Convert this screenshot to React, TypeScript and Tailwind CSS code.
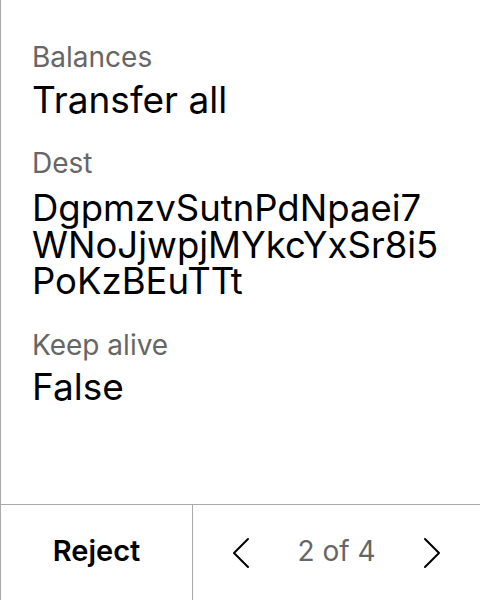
const FONT = { fontFamily: 'Inter, "Liberation Sans", sans-serif' };

function Chevron({ dir }: { dir: 'left' | 'right' }) {
  return (
    <svg width="18" height="32" viewBox="0 0 18 32" fill="none" className="shrink-0">
      <polyline
        points={dir === 'left' ? '16,2 2,16 16,30' : '2,2 16,16 2,30'}
        stroke="black"
        strokeWidth="2"
        strokeLinecap="round"
        strokeLinejoin="round"
      />
    </svg>
  );
}

export default function App() {
  return (
    <div
      className="w-[480px] h-[600px] bg-white border-l border-[#aaaaaa] flex flex-col"
      style={FONT}
    >
      <div className="flex-1 pl-[31px] pr-2 pt-[41px]">
        <p className="text-[28px] leading-[32px] text-[#666666]">Balances</p>
        <p className="mt-[8px] text-[37px] leading-[37px] text-black">Transfer all</p>

        <p className="mt-[29px] text-[28px] leading-[32px] text-[#666666]">Dest</p>
        <p className="mt-[11px] text-[36.5px] leading-[36.7px] text-black">
          DgpmzvSutnPdNpaei7
          <br />
          WNoJjwpjMYkcYxSr8i5
          <br />
          PoKzBEuTTt
        </p>

        <p className="mt-[29px] text-[28px] leading-[32px] text-[#666666]">Keep alive</p>
        <p className="mt-[7px] text-[37px] leading-[37px] text-black">False</p>
      </div>

      <div className="h-[96px] border-t border-[#aaaaaa] flex shrink-0">
        <button className="w-[192px] pb-[3px] border-r border-[#aaaaaa] flex items-center justify-center text-[29px] font-semibold text-black">
          Reject
        </button>
        <div className="flex-1 flex items-center justify-center gap-[47px]">
          <Chevron dir="left" />
          <span className="pb-[3px] text-[28px] text-[#666666]">2 of 4</span>
          <Chevron dir="right" />
        </div>
      </div>
    </div>
  );
}
